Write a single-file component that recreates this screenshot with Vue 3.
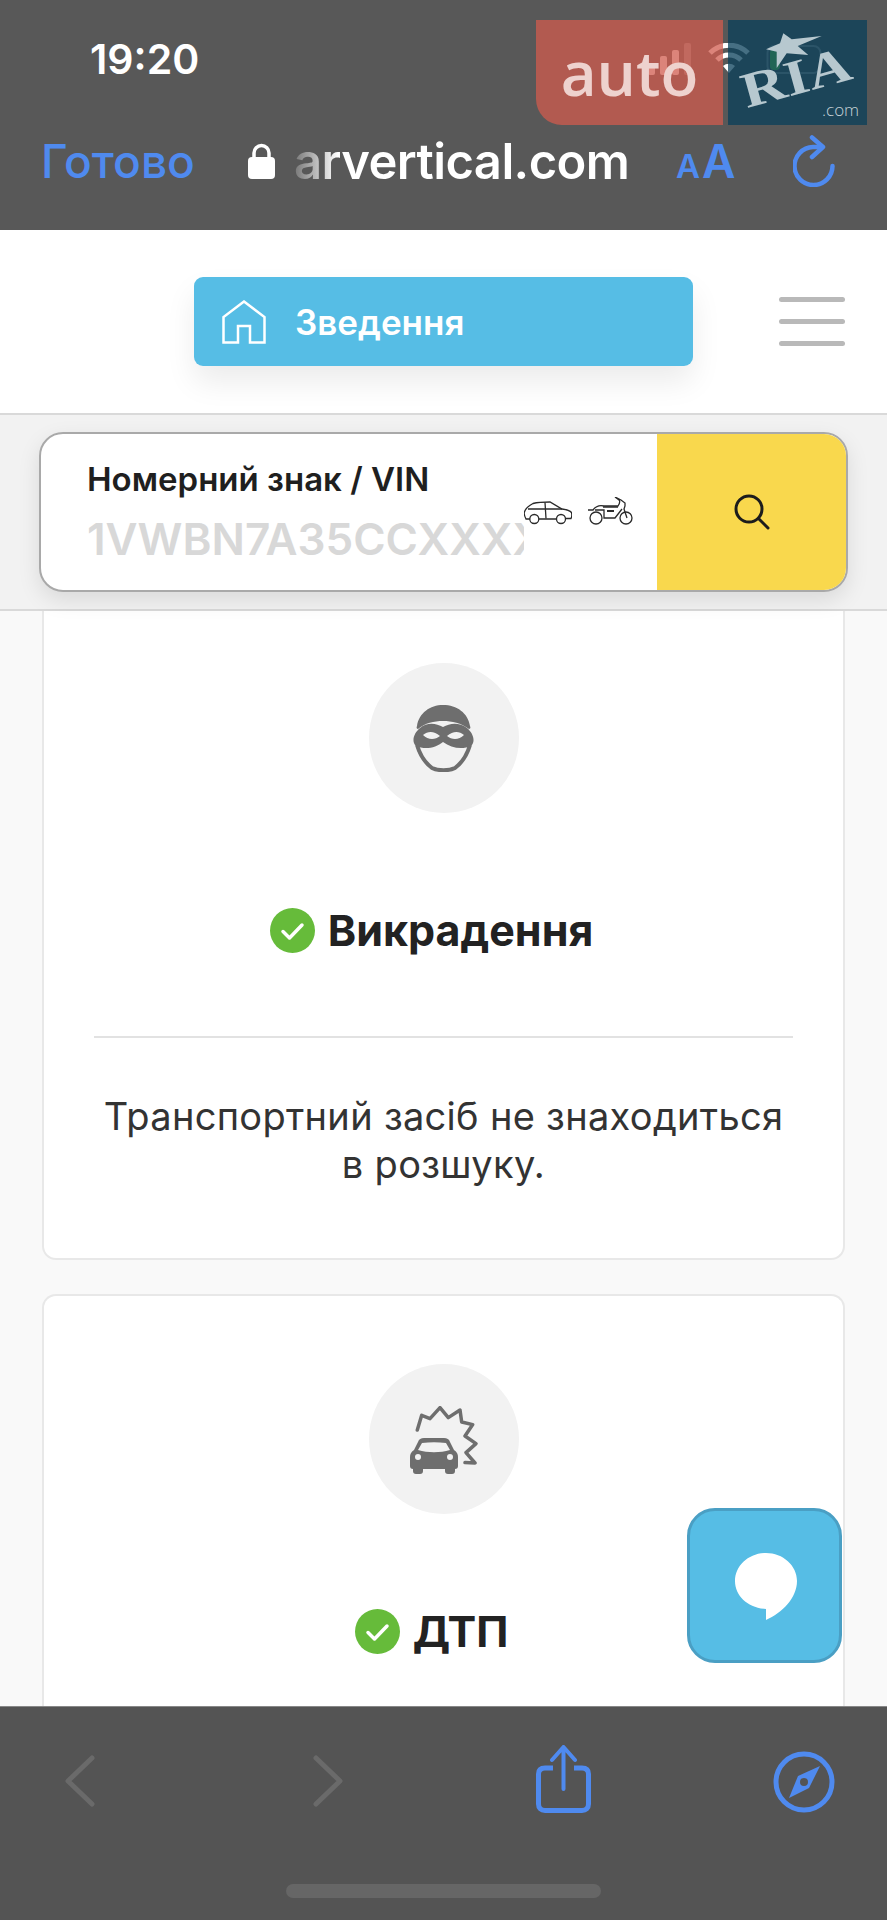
<script setup>
const cards = [
  { id: 'theft', title: 'Викрадення', text: ['Транспортний засіб не знаходиться', 'в розшуку.'] },
  { id: 'crash', title: 'ДТП', text: [] }
]
</script>

<template>
  <div class="phone">
    <!-- Safari top -->
    <header class="top">
      <div class="status"><span class="time">19:20</span></div>
      <div class="nav">
        <span class="done">Готово</span>
        <svg class="lock" viewBox="0 0 27 36" aria-hidden="true">
          <path d="M6 16V10a7.500 7.500 0 0 1 15 0v6" fill="none" stroke="#fff" stroke-width="3.500"/>
          <rect x="0" y="14" width="27" height="22" rx="4" fill="#fff"/>
        </svg>
        <span class="url">arvertical.com</span>
        <span class="aa"><small>A</small>A</span>
        <svg class="reload" viewBox="0 0 42 52" aria-hidden="true">
          <path d="M29 12H20A19 19 0 1 0 39.500 31" fill="none" stroke="#4f8aef" stroke-width="4.500" stroke-linecap="round"/>
          <path d="M19 2.500L30 12 19 22" fill="none" stroke="#4f8aef" stroke-width="4.500" stroke-linecap="round" stroke-linejoin="round"/>
        </svg>
      </div>

      <!-- status icons, seen through the ad -->
      <svg class="status-icons" viewBox="0 0 174 32" aria-hidden="true">
        <rect x="0" y="20" width="7" height="12" rx="2" fill="#fff"/>
        <rect x="12" y="13" width="7" height="19" rx="2" fill="#fff"/>
        <rect x="24" y="7" width="7" height="25" rx="2" fill="#fff"/>
        <rect x="36" y="0" width="7" height="32" rx="2" fill="#fff" opacity=".35"/>
        <path d="M62 10a27 27 0 0 1 38 0M69 17a17 17 0 0 1 24 0" fill="none" stroke="#fff" stroke-width="5"/>
        <path d="M75 23a9 9 0 0 1 12 0l-6 7z" fill="#fff"/>
        <rect x="119.500" y="3" width="53" height="27" rx="7" fill="none" stroke="#fff" stroke-width="2" opacity=".35"/>
        <rect x="122" y="6" width="10" height="21" rx="4" fill="#6dd54a"/>
      </svg>

      <!-- ad -->
      <div class="ad">
        <div class="ad-auto">auto</div>
        <div class="ad-ria">
          <svg viewBox="0 0 139 105" aria-hidden="true">
            <polygon points="55.300,13.300 63.700,19.300 93.700,16 69.700,26 80.300,35 58.700,33.300 48.700,48 48.700,31.700 38,29.300 52,23.300" fill="#b7c8cf"/>
            <text x="18.700" y="88.300" transform="rotate(-15.500 18.700 88.300)" class="ria-text" textLength="112" lengthAdjust="spacingAndGlyphs">RIA</text>
            <text x="94" y="96" class="ria-com">.com</text>
          </svg>
        </div>
      </div>
    </header>

    <!-- site header -->
    <div class="site-head">
      <div class="summary">
        <svg class="home" viewBox="0 0 44 44" aria-hidden="true">
          <path d="M1.500 42.500V17L22 1.500 42.500 17v25.500H28V26H16v16.500z" fill="none" stroke="#fff" stroke-width="2.500"/>
        </svg>
        <span>Зведення</span>
      </div>
      <div class="burger"><i></i><i></i><i></i></div>
    </div>

    <!-- search band -->
    <div class="band">
      <div class="search">
        <div class="search-left">
          <div class="search-text">
            <div class="search-label">Номерний знак / VIN</div>
            <div class="search-ph">1VWBN7A35CCXXXX</div>
          </div>
          <div class="vehicles">
            <svg class="veh-car" viewBox="0 0 48 24" aria-hidden="true">
              <g fill="none" stroke="#2a2a2a" stroke-width="1.300">
                <path d="M5.800 18H2C.5 15 0 12 .5 11 1 8 3 6 9 2.500 15 1 21 1 26 1l12 7c4 .5 8 1.500 9.500 3.500.5 2 .5 4-.5 6h-5.500M15 18h17.500"/>
                <path d="M4 8h34M21 1.500l1 16"/>
                <circle cx="10.300" cy="18" r="4.500"/>
                <circle cx="37" cy="18" r="4.500"/>
              </g>
            </svg>
            <svg class="veh-moto" viewBox="0 0 46 28" aria-hidden="true">
              <g fill="none" stroke="#2a2a2a" stroke-width="1.300">
                <circle cx="8" cy="21" r="6"/>
                <circle cx="38" cy="21" r="6"/>
                <path d="M0 13h5c3-4 7-5 11-4h14c2-3 2-5 1-6l-4-3 6 3 4 3 0 3-1 3 3 9"/>
                <path d="M7 13h9v8h11l7-9M15 10h15"/>
                <path d="M19 14h7" stroke-width="2"/>
              </g>
            </svg>
          </div>
        </div>
        <div class="search-btn">
          <svg viewBox="0 0 36 36" aria-hidden="true">
            <circle cx="15" cy="15" r="13" fill="none" stroke="#1c1c1c" stroke-width="3"/>
            <path d="M24.500 24.500L34 34" stroke="#1c1c1c" stroke-width="3" stroke-linecap="round"/>
          </svg>
        </div>
      </div>
    </div>

    <!-- cards -->
    <main class="content">
      <section v-for="c in cards" :key="c.id" :class="['card', 'card-' + c.id]">
        <div class="circle">
          <svg v-if="c.id === 'theft'" class="ic-mask" viewBox="0 0 63 67" aria-hidden="true">
            <path d="M5 21C7 8 18 0 31 0c14 0 25 8 27 21 1 2 0 3-1 3-8-6-17-8-26-8-9 0-18 2-25 8-1 0-2-1-1-3z" fill="#6e6e6e"/>
            <path d="M8 23C2 28-1 36 4 41c9 4 20 2 27-4 8 6 19 8 28 4 5-5 2-13-4-18-8-6-17-5-24-1-7-4-16-5-23 1z" fill="#6e6e6e"/>
            <path d="M11 30c5-4 11-4 17 1-5 4-12 4-17-1zM35 31c6-5 12-5 17-1-5 5-12 5-17 1z" fill="#f2f2f2"/>
            <path d="M5 40c3 10 7 17 15 23 6 3 17 3 23 0 8-6 12-13 15-23" fill="none" stroke="#6e6e6e" stroke-width="4"/>
          </svg>
          <svg v-else class="ic-crash" viewBox="0 0 68 68" aria-hidden="true">
            <path d="M7.300 24l4.400-14.700 8.300 3.300L30 1.600l8.300 10L50 4l1.700 12 11 2.600L55 30l11 7.600-10 9L65 57l-10-.4" fill="none" stroke="#6e6e6e" stroke-width="3.500" stroke-linejoin="round" stroke-linecap="round"/>
            <path fill-rule="evenodd" fill="#6e6e6e" d="M14 32h20c3 0 5 1 6 4l4 8c3 2 4 4 4 7v9c0 2-1 3-3 3v2c0 2-1 3-3 3h-4c-2 0-3-1-3-3v-2H13v2c0 2-1 3-3 3H6c-2 0-3-1-3-3v-2c-2 0-3-1-3-3v-9c0-3 1-5 4-7l4-8c1-3 3-4 6-4zM12 37l-4 7c10 3 22 3 32 0l-4-7c-8-1-16-1-24 0zM8 48a3 3 0 1 0 0 6 3 3 0 0 0 0-6zM40 48a3 3 0 1 0 0 6 3 3 0 0 0 0-6z"/>
          </svg>
        </div>
        <h2 class="title">
          <svg class="check" viewBox="0 0 45 45" aria-hidden="true">
            <circle cx="22.500" cy="22.500" r="22.500" fill="#66bb3a"/>
            <path d="M13 23.500l6.500 6.500L32 17" fill="none" stroke="#fff" stroke-width="3.500" stroke-linecap="round" stroke-linejoin="round"/>
          </svg>
          {{ c.title }}
        </h2>
        <template v-if="c.text.length">
          <hr class="divider" />
          <p class="desc"><span v-for="l in c.text" :key="l">{{ l }}</span></p>
        </template>
      </section>

      <button class="chat" type="button" aria-label="chat">
        <svg viewBox="0 0 62 67" aria-hidden="true">
          <path d="M31 0C14 0 0 12.500 0 28c0 15 13 27 31 28v11c16-7 31-22 31-39C62 12.500 48 0 31 0z" fill="#fff"/>
        </svg>
      </button>
    </main>

    <!-- Safari bottom -->
    <footer class="bottom">
      <div class="tools">
        <svg class="chev" viewBox="0 0 30 52" aria-hidden="true"><path d="M27 3L3 26l24 23" fill="none" stroke="#6a6a6a" stroke-width="5" stroke-linecap="round" stroke-linejoin="round"/></svg>
        <svg class="chev" viewBox="0 0 30 52" aria-hidden="true"><path d="M3 3l24 23L3 49" fill="none" stroke="#6a6a6a" stroke-width="5" stroke-linecap="round" stroke-linejoin="round"/></svg>
        <svg class="share" viewBox="0 0 55 68" aria-hidden="true">
          <path d="M17 23H9c-4 0-6.500 2-6.500 6v30c0 4 2.500 6.500 6.500 6.500h37c4 0 6.500-2.500 6.500-6.500V29c0-4-2.500-6-6.500-6h-8" fill="none" stroke="#4f8aef" stroke-width="5"/>
          <path d="M27.500 44V3M16 15L27.500 2 39 15" fill="none" stroke="#4f8aef" stroke-width="4" stroke-linecap="round" stroke-linejoin="round"/>
        </svg>
        <svg class="compass" viewBox="0 0 62 62" aria-hidden="true">
          <circle cx="31" cy="31" r="28" fill="none" stroke="#4f8aef" stroke-width="5"/>
          <path fill-rule="evenodd" fill="#4f8aef" d="M47 15L36 37 16 47l9-22zM31 27a4 4 0 1 0 0 8 4 4 0 0 0 0-8z"/>
        </svg>
      </div>
      <div class="home-bar"></div>
    </footer>
  </div>
</template>

<style scoped>
.phone {
  position: relative;
  width: 887px;
  height: 1920px;
  display: flex;
  flex-direction: column;
  overflow: hidden;
  background: #f9f9f9;
  font-family: Inter, "Liberation Sans", sans-serif;
  color: #222;
}

/* top bar */
.top {
  position: relative;
  height: 230px;
  flex-shrink: 0;
  background: #585858;
  color: #fff;
}
.status {
  height: 125px;
  padding: 36px 0 0 90px;
  box-sizing: border-box;
}
.time {
  font-size: 41px;
  font-weight: 600;
  line-height: 46px;
}
.nav {
  display: flex;
  align-items: center;
  height: 72px;
  padding-left: 41px;
}
.done {
  width: 207px;
  font-size: 46px;
  font-weight: 500;
  color: #4f8aef;
}
.lock {
  width: 27px;
  height: 36px;
  margin-right: 19px;
}
.url {
  width: 382px;
  font-size: 49px;
  font-weight: 600;
  white-space: nowrap;
  letter-spacing: -.6px;
  background: linear-gradient(90deg, #777 0, #fff 44px);
  -webkit-background-clip: text;
  background-clip: text;
  color: transparent;
}
.aa {
  width: 117px;
  font-size: 46px;
  font-weight: 600;
  color: #4f8aef;
}
.aa small { font-size: 33px; margin-right: 2px; }
.reload {
  width: 42px;
  height: 52px;
}
.status-icons {
  position: absolute;
  left: 648px;
  top: 43px;
  width: 174px;
  height: 32px;
}
.ad {
  position: absolute;
  left: 536px;
  top: 20px;
  display: flex;
  gap: 5px;
  height: 105px;
}
.ad-auto {
  width: 187px;
  padding-top: 14px;
  box-sizing: border-box;
  background: rgba(208, 91, 77, .75);
  border-bottom-left-radius: 26px;
  font-family: "Open Sans", sans-serif;
  font-size: 62px;
  font-weight: 600;
  line-height: 76px;
  text-align: center;
  color: #eed2ce;
}
.ad-ria {
  width: 139px;
  background: rgba(8, 63, 89, .75);
}
.ad-ria svg { display: block; width: 139px; height: 105px; }
.ria-text {
  font-family: "Liberation Serif", serif;
  font-size: 50px;
  font-weight: 700;
  fill: #b7c8cf;
}
.ria-com {
  font-family: "Open Sans", sans-serif;
  font-size: 17px;
  font-weight: 300;
  fill: #c6d3d8;
}

/* site header */
.site-head {
  position: relative;
  height: 183px;
  flex-shrink: 0;
  box-sizing: border-box;
  padding: 47px 42px 0 194px;
  display: flex;
  justify-content: space-between;
  background: #fff;
}
.summary {
  display: flex;
  align-items: center;
  gap: 29px;
  width: 499px;
  height: 89px;
  padding-left: 28px;
  box-sizing: border-box;
  background: #56bde5;
  border-radius: 9px;
  box-shadow: 0 16px 30px rgba(0, 0, 0, .08);
  font-size: 35px;
  font-weight: 600;
  color: #fff;
}
.home { width: 44px; height: 44px; }
.burger {
  display: flex;
  flex-direction: column;
  gap: 17px;
  width: 66px;
  padding-top: 20px;
}
.burger i {
  height: 5px;
  border-radius: 3px;
  background: #b9b9b9;
}

/* search band */
.band {
  position: relative;
  z-index: 2;
  height: 198px;
  flex-shrink: 0;
  box-sizing: border-box;
  padding: 17px 39px 0;
  background: #f2f2f2;
  border-top: 2px solid #d9d9d9;
  border-bottom: 2px solid #d9d9d9;
}
.search {
  display: flex;
  height: 160px;
  box-sizing: border-box;
  border: 2px solid #a9a9a9;
  border-radius: 24px;
  background: #fff;
  overflow: hidden;
  box-shadow: 0 8px 22px rgba(0, 0, 0, .1);
}
.search-left {
  flex: 1;
  display: flex;
  padding-left: 46px;
}
.search-text { width: 437px; overflow: hidden; }
.search-label {
  margin-top: 26px;
  font-size: 33px;
  font-weight: 600;
  line-height: 38px;
  white-space: nowrap;
  color: #1f1f1f;
}
.search-ph {
  margin-top: 15px;
  font-size: 44px;
  font-weight: 600;
  line-height: 52px;
  white-space: nowrap;
  color: #d8d8d8;
}
.vehicles {
  display: flex;
  align-items: flex-end;
  gap: 16px;
  height: 91px;
}
.veh-car { width: 48px; height: 24px; }
.veh-moto { width: 46px; height: 28px; }
.search-btn {
  width: 189px;
  display: flex;
  align-items: center;
  justify-content: center;
  background: #f9d84d;
}
.search-btn svg { width: 36px; height: 36px; }

/* cards */
.content {
  position: relative;
  flex: 1;
  min-height: 0;
  overflow: hidden;
  padding: 0 42px;
  display: flex;
  flex-direction: column;
  gap: 34px;
}
.card {
  flex-shrink: 0;
  box-sizing: border-box;
  display: flex;
  flex-direction: column;
  align-items: center;
  background: #fff;
  border: 2px solid #e8e8e8;
}
.card-theft {
  height: 649px;
  padding-top: 52px;
  border-top: none;
  border-radius: 0 0 14px 14px;
}
.card-crash {
  height: 500px;
  padding-top: 68px;
  border-bottom: none;
  border-radius: 14px 14px 0 0;
}
.circle {
  width: 150px;
  height: 150px;
  flex-shrink: 0;
  display: flex;
  align-items: center;
  justify-content: center;
  border-radius: 50%;
  background: #f2f2f2;
}
.ic-mask { width: 63px; height: 67px; }
.ic-crash { width: 68px; height: 68px; margin-top: 2px; }
.title {
  display: flex;
  align-items: center;
  gap: 13px;
  height: 50px;
  margin: 92px 24px 0 0;
  font-size: 43px;
  font-weight: 700;
  color: #222;
}
.check { width: 45px; height: 45px; }
.divider {
  width: 699px;
  height: 2px;
  margin: 81px 0 0;
  border: 0;
  background: #e2e2e2;
}
.desc {
  display: flex;
  flex-direction: column;
  align-items: center;
  margin: 54px 0 0;
  font-size: 38px;
  line-height: 48px;
  letter-spacing: .3px;
  color: #333;
}
.chat {
  position: absolute;
  right: 45px;
  top: 897px;
  width: 155px;
  height: 155px;
  padding: 0 0 0 2px;
  display: flex;
  align-items: center;
  justify-content: center;
  background: #56bde5;
  border: 3px solid #4a9fc4;
  border-radius: 28px;
}
.chat svg { width: 62px; height: 67px; margin-top: 2px; }

/* bottom bar */
.bottom {
  height: 214px;
  flex-shrink: 0;
  background: #545454;
  border-top: 1px solid #888;
  box-sizing: border-box;
}
.tools {
  position: relative;
  height: 177px;
}
.tools svg { position: absolute; }
.chev { width: 30px; height: 52px; top: 48px; }
.chev:nth-child(1) { left: 65px; }
.chev:nth-child(2) { left: 313px; }
.share { left: 536px; top: 38px; width: 55px; height: 68px; }
.compass { left: 773px; top: 44px; width: 62px; height: 62px; }
.home-bar {
  width: 315px;
  height: 14px;
  margin: 0 0 0 286px;
  border-radius: 7px;
  background: #666;
}
</style>
